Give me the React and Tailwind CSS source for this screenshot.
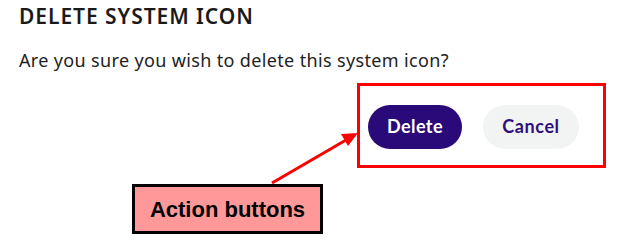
export default function App() {
  return (
    <div className="relative w-[623px] h-[240px] bg-white overflow-hidden">
      <div className="pl-[19px] pt-[3px]">
        <h2 className="text-[21px] leading-[26px] font-semibold text-[#1a1a1a] tracking-[0.95px] [font-family:'Noto_Sans',sans-serif]">
          DELETE SYSTEM ICON
        </h2>
        <p className="mt-[19px] text-[18px] leading-[24px] text-[#222] tracking-[0.35px] [font-family:'Noto_Sans',sans-serif]">
          Are you sure you wish to delete this system icon?
        </p>
      </div>

      {/* highlighted action buttons */}
      <div className="absolute left-[357px] top-[83px] w-[249px] h-[85px] border-[3px] border-[#ff0000] flex items-center gap-[21px] pl-[8px] pt-[2px]">
        <button className="w-[94px] h-[44px] rounded-full bg-[#2a0a78] text-white text-[18px] font-bold tracking-[0.4px] [font-family:'Lato',sans-serif]">
          Delete
        </button>
        <button className="w-[96px] h-[44px] rounded-full bg-[#f2f4f4] text-[#2e0f7a] text-[18px] font-bold tracking-[0.6px] [font-family:'Lato',sans-serif]">
          Cancel
        </button>
      </div>

      <svg className="absolute left-0 top-0" width="623" height="240">
        <line x1="272" y1="183" x2="346" y2="140" stroke="#ff0000" strokeWidth="3" />
        <polygon points="358,133 341,134 348,146" fill="#ff0000" />
      </svg>

      <div className="absolute left-[132px] top-[184px] w-[191px] h-[50px] border-[3px] border-black bg-[#ff9999] flex items-center justify-center">
        <span className="text-[22px] font-bold text-black [font-family:'Liberation_Sans',sans-serif]">
          Action buttons
        </span>
      </div>
    </div>
  )
}
